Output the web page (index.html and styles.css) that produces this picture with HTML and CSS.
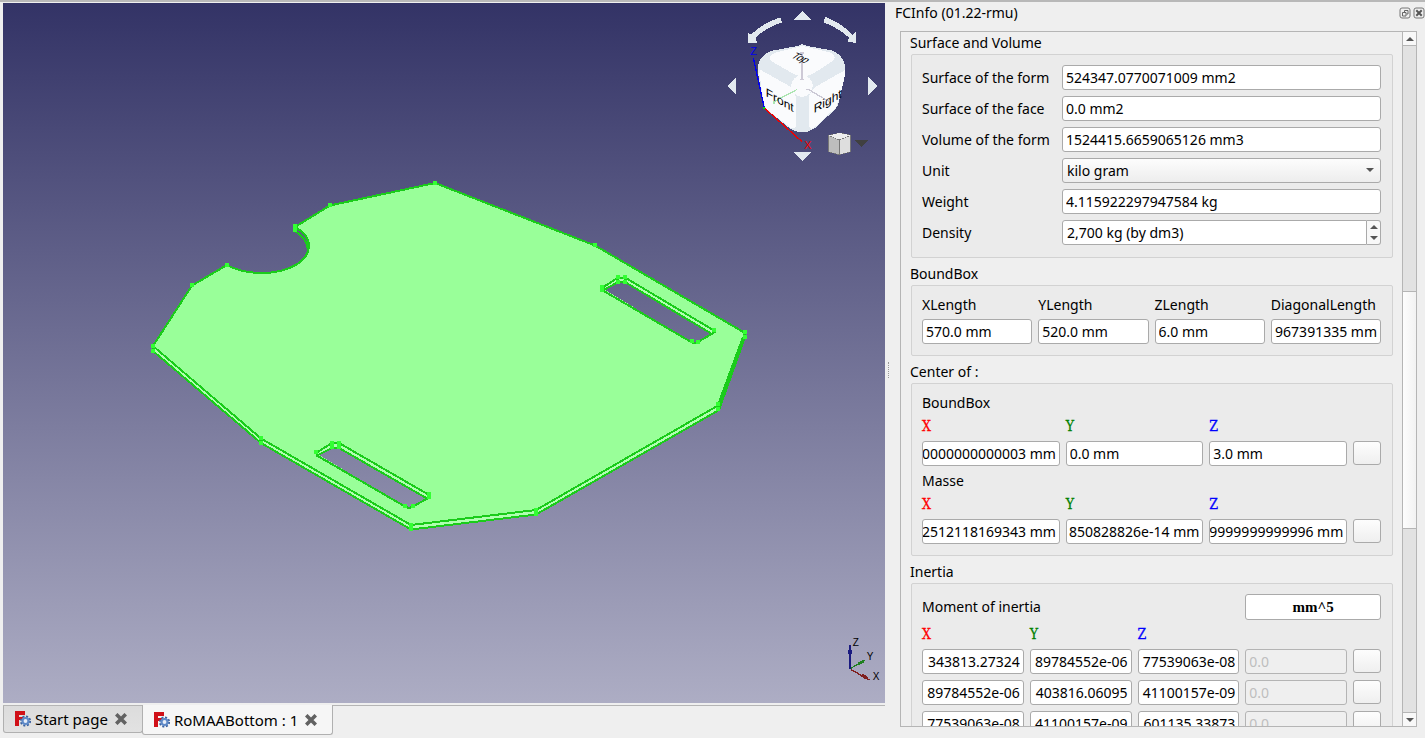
FILE: index.html
```html
<!DOCTYPE html>
<html lang="en">
<head>
<meta charset="utf-8">
<title>RoMAABottom</title>
<link rel="stylesheet" href="styles.css">
</head>
<body>
<svg class="defs" width="0" height="0" aria-hidden="true">
  <symbol id="app-logo" viewBox="0 0 16 16">
    <g fill="#d01018"><rect x="0" y="0" width="4" height="15"/><rect x="0" y="0" width="10" height="4"/><rect x="0" y="6" width="8" height="3"/></g>
    <circle cx="10.500" cy="10" r="4.600" fill="none" stroke="#3c62a0" stroke-width="2" stroke-dasharray="2 1.610"/>
    <circle cx="10.500" cy="10" r="3" fill="#e8eef8" stroke="#5f8ac8" stroke-width="2.200"/>
  </symbol>
  <symbol id="cross" viewBox="0 0 12 12">
    <path d="M2.500 2.500L9.500 9.500M9.500 2.500L2.500 9.500" stroke="#626262" stroke-width="3.600" stroke-linecap="square"/>
  </symbol>
</svg>
<div class="window">
  <main class="workspace">
    <div class="viewer">
      <svg class="model" viewBox="3 3 882 700" role="img" aria-label="3D model">
        <path class="side" d="M153 346L261 438.500 411 525 536 510 719 405 745 333V337L719 410 536 514.500 411 529.500 261 443 153 351Z"/>
        <path class="face" fill-rule="evenodd" d="M435 183L595 245.500 745 333 719 405 536 510 411 525 261 438.500 153 346 192 285.500 227 265C236 270 246 273 262 273C290 273 309 260 309 246C309 238 304 232 295 227L330 205.500ZM602 288L618 277.500 625 277.500 714 330.500 715 332 697 342.500H692ZM316 453L332 443H339L430 495.500 412 507 409 508 405 506.500Z"/>
        <path class="side" d="M602 288L618 277.500H625L714 330.500 712 334 625 282H618L602 291ZM316 453L332 443H339L430 495.500 427 498.500 339 448H332L316 456Z"/>
        <path class="edge" d="M435 183L595 245.500 745 333 719 405 536 510 411 525 261 438.500 153 346 192 285.500 227 265C236 270 246 273 262 273C290 273 309 260 309 246C309 238 304 232 295 227L330 205.500Z"/>
        <path class="edge" d="M153 346V351L261 443 411 529.500 536 514.500 719 410 745 337V333M295 227V231C303 236 307 241 308 250M261 438V443M411 525V530M536 510V515M719 405V410M743 337L718 405"/>
        <path class="edge" d="M602 288L618 277.500H625L714 330.500 715 332 697 342.500H692L602 290M602 291L618 282H625L712 334M618 277V282M625 277V282"/>
        <path class="edge" d="M316 453L332 443H339L430 495.500V497L412 507 409 508 405 506.500 316 455M316 456L332 448H339L427 498.500M332 443V448M339 443V448"/>
        <path class="vertex" d="M435 183h0M595 245h0M745 332h0M745 337h0M718 404h0M718 409h0M536 510h0M536 514h0M411 525h0M411 529h0M261 438h0M261 443h0M153 346h0M153 351h0M192 285h0M227 265h0M295 226h0M295 230h0M330 205h0M602 287h0M602 290h0M618 277h0M618 282h0M625 277h0M625 282h0M714 330h0M698 342h0M692 341h0M316 452h0M332 443h0M332 447h0M339 443h0M339 447h0M429 494h0M429 497h0M413 506h0M405 506h0"/>
      </svg>
      <svg class="navcube" viewBox="0 9 510 501" role="img" aria-label="Navigation cube">
        <g fill="#e2e9ef">
          <path d="M262 33L288 60H236ZM262 483L288 456H236ZM38 258L63 233V284ZM486 258L459 231V285Z"/>
          <path d="M196 52L201 67Q157 81 121 113L126 128H99V99L108 104Q148 66 196 52ZM331 51L325 67Q367 82 402 113L397 124 423 129V96L413 104Q375 66 331 51Z"/>
          <path d="M248 138Q262 128 276 138L350 151Q386 165 391 201V222L370 311Q365 327 350 338L298 386Q262 408 225 386L155 329Q145 318 143 298L129 220V195Q138 163 172 152Z"/>
        </g>
        <g fill="#fafbfd">
          <path d="M180 158L252 140Q262 137 272 140L343 157Q371 170 350 185L293 222Q262 236 234 221L170 184Q154 172 180 158Z"/>
          <path d="M137 210L223 258Q237 270 242 288V380Q235 391 222 380L154 326Q147 313 145 298L133 220Z"/>
          <path d="M389 211L304 259Q288 270 282 288V380Q288 392 301 380L363 322 374 294 391 220Z"/>
          <circle cx="261" cy="258" r="32"/>
        </g>
        <g fill="none" stroke-width="5">
          <path d="M261 158V238M255 158h12M255 238h12" stroke="#cdc9d6"/>
          <path d="M274 268h12M280 268L346 307V314" stroke="#cbc9d5" stroke-width="4"/>
          <path d="M245 269L177 305V312" stroke="#ade5b2" stroke-width="4"/>
          <path d="M115 174L148 324" stroke="#0000f0" stroke-width="4"/>
          <path d="M148 324L261 425" stroke="#f00000" stroke-width="4"/>
        </g>
        <path d="M147 320v7" stroke="#00e000" stroke-width="4"/>
        <text x="106" y="165" class="axis-z">Z</text>
        <text x="268" y="446" class="axis-x">X</text>
        <text class="face-name" transform="translate(152 288) skewY(30)">Front</text>
        <text class="face-name" transform="translate(296 340) skewY(-30)">Right</text>
        <text transform="translate(226 172) rotate(22) skewX(-32)" class="top">Top</text>
        <path d="M340 405L374 398 408 405V456L372 465 340 456Z" fill="#777"/>
        <path d="M342 406L374 399 406 406 372 419Z" fill="#eee"/><path d="M342 408L371 420V463L342 455Z" fill="#bdbdbd"/><path d="M374 420L406 408V455L374 463Z" fill="#dedede"/>
        <path d="M419 420H462L440 442Z" fill="#404040"/>
      </svg>
      <svg class="axes" viewBox="60 40 135 210" role="img" aria-label="Axis cross">
        <path d="M90 75V147" stroke="#1a1a80" stroke-width="4"/><path d="M86 87h8l2 17H84Z" fill="#1a1a80"/>
        <path d="M92 146L134 122" stroke="#208020" stroke-width="4"/><path d="M112 129L128 121 132 128 118 136Z" fill="#208020"/>
        <path d="M92 149L149 181" stroke="#802020" stroke-width="4"/><path d="M126 163L138 166 146 179 133 177 123 170Z" fill="#802020"/>
        <text x="98" y="78">Z</text><text x="140" y="122">Y</text><text x="158" y="182">X</text>
      </svg>
    </div>
    <nav class="tabs" role="tablist">
      <div class="tab"><svg class="logo"><use href="#app-logo"/></svg><span role="tab">Start page</span><button class="close" aria-label="Close Start page"><svg class="x"><use href="#cross"/></svg></button></div>
      <div class="tab active"><svg class="logo"><use href="#app-logo"/></svg><span role="tab">RoMAABottom : 1</span><button class="close" aria-label="Close RoMAABottom"><svg class="x"><use href="#cross"/></svg></button></div>
    </nav>
  </main>
  <div class="splitter"></div>
  <aside class="dock">
    <header class="dock-title"><h1>FCInfo (01.22-rmu)</h1>
      <button class="dock-btn" aria-label="Float"><svg viewBox="0 0 12 12"><rect x="1" y="1" width="10" height="10" rx="2" fill="none" stroke="#777"/><path d="M5.500 5V3.500h3.500v3.500H7.500M3.500 5.500h3.500v3.500H3.500Z" fill="none" stroke="#666"/></svg></button>
      <button class="dock-btn" aria-label="Close"><svg viewBox="0 0 12 12"><rect x="1" y="1" width="10" height="10" rx="2" fill="none" stroke="#777"/><path d="M4 4l4 4M8 4l-4 4" stroke="#555" stroke-width="2" stroke-linecap="square"/></svg></button>
    </header>
    <div class="scroll">
      <div class="content">
        <section><h2>Surface and Volume</h2>
          <div class="frame form">
            <label for="sform">Surface of the form</label><input id="sform" value="524347.0770071009 mm2">
            <label for="sface">Surface of the face</label><input id="sface" value="0.0 mm2">
            <label for="vform">Volume of the form</label><input id="vform" value="1524415.6659065126 mm3">
            <label for="unit">Unit</label><div class="select"><select id="unit"><option>kilo gram</option></select><i class="arrow down"></i></div>
            <label for="weight">Weight</label><input id="weight" value="4.115922297947584 kg">
            <label for="density">Density</label><div class="spin"><input id="density" value="2,700 kg (by dm3)"><div class="steps"><button aria-label="Increase"><i class="arrow up"></i></button><button aria-label="Decrease"><i class="arrow down"></i></button></div></div>
          </div>
        </section>
        <section><h2>BoundBox</h2>
          <div class="frame">
            <div class="row four"><label for="xl">XLength</label><label for="yl">YLength</label><label for="zl">ZLength</label><label for="dl">DiagonalLength</label></div>
            <div class="row four lengths"><input id="xl" value="570.0 mm"><input id="yl" value="520.0 mm"><input id="zl" value="6.0 mm"><input id="dl" class="tail" value="967391335 mm"></div>
          </div>
        </section>
        <section><h2>Center of :</h2>
          <div class="frame">
            <h3>BoundBox</h3>
            <div class="row center axis"><label class="ax" for="bx">X</label><label class="ay" for="by">Y</label><label class="az" for="bz">Z</label></div>
            <div class="row center fields"><input id="bx" class="tail" value="00000000000003 mm"><input id="by" value="0.0 mm"><input id="bz" value="3.0 mm"><button class="push" aria-label="Mark boundbox center"></button></div>
            <h3 class="next">Masse</h3>
            <div class="row center axis"><label class="ax" for="mx">X</label><label class="ay" for="my">Y</label><label class="az" for="mz">Z</label></div>
            <div class="row center fields"><input id="mx" class="tail" value="2512118169343 mm"><input id="my" class="tail" value="850828826e-14 mm"><input id="mz" class="tail" value="99999999999996 mm"><button class="push" aria-label="Mark mass center"></button></div>
          </div>
        </section>
        <section><h2>Inertia</h2>
          <div class="frame">
            <div class="row inertia"><h3 class="moment">Moment of inertia</h3><button class="unit-btn">mm^5</button></div>
            <div class="row inertia axis"><span class="ax">X</span><span class="ay">Y</span><span class="az">Z</span></div>
            <div class="row inertia fields"><input class="tail" aria-label="XX" value="343813.27324"><input class="tail" aria-label="XY" value="89784552e-06"><input class="tail" aria-label="XZ" value="77539063e-08"><input disabled aria-label="Row 1" value="0.0"><button class="push" aria-label="Row 1 action"></button></div>
            <div class="row inertia fields"><input class="tail" aria-label="YX" value="89784552e-06"><input class="tail" aria-label="YY" value="403816.06095"><input class="tail" aria-label="YZ" value="41100157e-09"><input disabled aria-label="Row 2" value="0.0"><button class="push" aria-label="Row 2 action"></button></div>
            <div class="row inertia fields"><input class="tail" aria-label="ZX" value="77539063e-08"><input class="tail" aria-label="ZY" value="41100157e-09"><input class="tail" aria-label="ZZ" value="601135.33873"><input disabled aria-label="Row 3" value="0.0"><button class="push" aria-label="Row 3 action"></button></div>
          </div>
        </section>
      </div>
      <div class="scrollbar"><button aria-label="Scroll up"><i class="arrow up"></i></button><div class="track"><div class="thumb"></div></div><button aria-label="Scroll down"><i class="arrow down"></i></button></div>
    </div>
  </aside>
</div>
<script src="script.js"></script>
</body>
</html>
```
FILE: styles.css
```css
* { box-sizing: border-box; }
body { margin: 0; background: #efefef; color: #000; font: 14px/18px "Noto Sans", "Open Sans", sans-serif; }
h1, h2, h3 { margin: 0; font-size: 14px; font-weight: 400; }
button, input, select { font: inherit; color: inherit; margin: 0; }
button { padding: 0; border: 0; background: none; }
.defs { position: absolute; }
.window { display: grid; grid-template-columns: minmax(0, 1fr) 8px 532px; height: 100vh; overflow: hidden; border-top: 2px solid #b8b8b8; }
.workspace { display: flex; flex-direction: column; min-width: 0; padding: 1px 0 2px 3px; }
.viewer { position: relative; flex: 1; min-height: 0; overflow: hidden; background: linear-gradient(#333366, #adadc4); }
.model { display: block; width: 100%; height: 100%; shape-rendering: crispEdges; }
.face { fill: #99ff99; }
.side { fill: #b0ffb0; }
.edge { fill: none; stroke: #1acc1a; stroke-width: 2; }
.vertex { stroke: #33ff33; stroke-width: 4; stroke-linecap: square; }
.navcube { position: absolute; top: 0; right: 0; width: 170px; height: 167px; shape-rendering: crispEdges; font: 33px "Liberation Sans", sans-serif; }
.navcube .top { font-size: 30px; }
.face-name { font-size: 36px; }
.axis-z { fill: #0000f0; }
.axis-x { fill: #f00000; }
.axes { position: absolute; right: 0; bottom: 0; width: 45px; height: 70px; font: 30px "Liberation Sans", sans-serif; shape-rendering: crispEdges; }
.tabs { display: flex; align-items: flex-start; height: 31px; margin-top: 2px; border-top: 1px solid #b5b5b5; }
.tab { display: flex; align-items: center; height: 27px; padding: 0 15px 0 11px; border: 1px solid #b0b0b0; border-top: 0; border-radius: 0 0 3px 3px; background: linear-gradient(#dcdcdc, #e2e2e2); font-size: 15px; }
.tab.active { height: 30px; margin: -1px 0 0 -1px; background: #f6f6f6; }
.logo { width: 16px; height: 16px; margin-right: 4px; }
.close { display: flex; margin-left: 7px; }
.x { width: 12px; height: 12px; }
.splitter { align-self: center; width: 3px; height: 16px; margin-left: 3px; border-left: 1px dotted #999; }
.dock { display: flex; flex-direction: column; min-width: 0; min-height: 0; padding: 0 8px 11px 7px; }
.dock-title { display: flex; align-items: center; height: 22px; margin: 0 -8px 7px -5px; }
.dock-title h1 { flex: 1; }
.dock-btn { display: flex; width: 12px; height: 12px; margin-left: 2px; }
.scroll { display: flex; flex: 1; min-height: 0; border: 1px solid #b5b5b5; }
.content { flex: 1; min-width: 0; overflow: hidden; padding: 0 9px 0 10px; }
section { margin-bottom: 6px; }
h2 { padding-bottom: 1px; margin-left: -1px; line-height: 21px; }
section + section h2 { line-height: 20px; }
.frame { padding: 10px 11px 11px 10px; border: 1px solid #d2d2d2; border-radius: 2px; background: #ebebeb; }
.form { display: grid; grid-template-columns: 134px minmax(0, 1fr); gap: 6px; align-items: center; padding-bottom: 12px; }
.row { display: grid; column-gap: 6px; }
.four { grid-template-columns: repeat(4, minmax(0, 1fr)); }
.center { grid-template-columns: repeat(3, minmax(0, 1fr)) 28px; }
.inertia { grid-template-columns: repeat(4, minmax(0, 1fr)) 28px; }
.axis { margin-top: 5px; font-family: "DejaVu Serif Condensed", "DejaVu Serif", serif; -webkit-text-stroke: 0.3px; }
.fields, .next { margin-top: 6px; }
.lengths { margin-top: 5px; }
.ax { color: #ff0000; }
.ay { color: #008000; }
.az { color: #0000ff; }
label { white-space: nowrap; }
input, select { width: 100%; min-width: 0; height: 25px; padding: 0 3px; border: 1px solid #aaa; border-radius: 3px; background: #fff; outline: 0; }
.tail { padding: 0 3px 0 0; text-align: right; }
input:disabled { background: #efefef; color: #bebebe; border-color: #b4b4b4; }
.select, .spin { position: relative; display: flex; }
select { appearance: none; padding-left: 4px; background: linear-gradient(#fdfdfd, #ededed); }
.select .arrow { position: absolute; right: 7px; top: 10px; }
.spin input { padding-left: 4px; border-radius: 3px 0 0 3px; }
.steps { display: flex; flex-direction: column; flex: 0 0 14px; border: 1px solid #aaa; border-left: 0; border-radius: 0 3px 3px 0; background: #f8f8f8; }
.steps button { display: flex; flex: 1; align-items: center; justify-content: center; }
.arrow { width: 0; height: 0; border: 4px solid transparent; }
.arrow.down { border-top-color: #555; border-bottom: 0; }
.arrow.up { border-bottom-color: #555; border-top: 0; }
.push, .unit-btn { height: 24px; border: 1px solid #aaa; border-radius: 3px; background: linear-gradient(#fdfdfd, #efefef); }
.moment { grid-column: 1 / 4; align-self: center; }
.unit-btn { grid-column: 4 / 6; height: 26px; background: #fff; font: bold 15px "Liberation Serif", serif; }
.scrollbar { display: flex; flex-direction: column; flex: 0 0 14px; border-left: 1px solid #b5b5b5; background: #e2e2e2; }
.scrollbar button { display: flex; align-items: center; justify-content: center; height: 13px; background: #f8f8f8; }
.track { flex: 1; border: 1px solid #b5b5b5; border-width: 1px 0; background: #e2e2e2; padding-top: 245px; }
.thumb { height: 238px; border: 1px solid #b5b5b5; border-width: 1px 0; background: linear-gradient(90deg, #fdfdfd, #f2f2f2); }
```
FILE: script.js
```js
// Long values show their last digits.
document.querySelectorAll('.tail').forEach(function (field) {
  field.scrollLeft = field.scrollWidth;
});
```
